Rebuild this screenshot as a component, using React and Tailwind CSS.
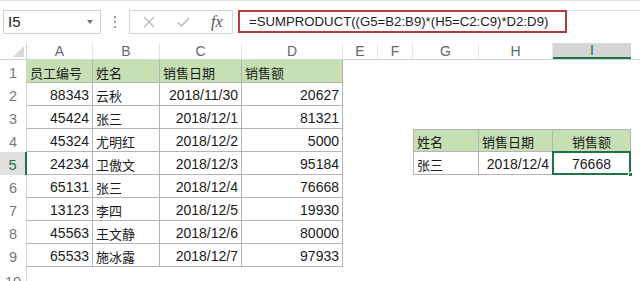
const cols = [
  "w-[27px]",
  "w-[66px]",
  "w-[67px]",
  "w-[82px]",
  "w-[101px]",
  "w-[35px]",
  "w-[35px]",
  "w-[66px]",
  "w-[74px]",
  "w-[78px]",
];
const letters = ["A", "B", "C", "D", "E", "F", "G", "H", "I"];

const data = [
  ["员工编号", "姓名", "销售日期", "销售额"],
  ["88343", "云秋", "2018/11/30", "20627"],
  ["45424", "张三", "2018/12/1", "81321"],
  ["45324", "尤明红", "2018/12/2", "5000"],
  ["24234", "卫傲文", "2018/12/3", "95184"],
  ["65131", "张三", "2018/12/4", "76668"],
  ["13123", "李四", "2018/12/5", "19930"],
  ["45563", "王文静", "2018/12/6", "80000"],
  ["65533", "施冰露", "2018/12/7", "97933"],
];

const lookup = {
  4: [
    { text: "姓名", align: "justify-start", cjk: true },
    { text: "销售日期", align: "justify-start", cjk: true },
    { text: "销售额", align: "justify-center", cjk: true },
  ],
  5: [
    { text: "张三", align: "justify-start", cjk: true },
    { text: "2018/12/4", align: "justify-end" },
    { text: "76668", align: "justify-center", selected: true },
  ],
};

function Cell({ width, children, className = "" }) {
  return (
    <div className={`${width} h-full shrink-0 flex items-center pt-[3px] px-[3px] ${className}`}>
      {children}
    </div>
  );
}

function FormulaBar() {
  return (
    <div className="h-[43px] flex items-start pt-[9px] border-t border-[#e4e4e4]">
      <div className="ml-[3px] w-[98px] h-[24px] border border-[#cfcfcf] flex items-center justify-between pl-[4px] pr-[7px]">
        <span className="text-[15px] text-[#222]">I5</span>
        <svg width="6" height="4" viewBox="0 0 6 4">
          <path d="M0 0h6L3 4z" fill="#777" />
        </svg>
      </div>
      <div className="w-[28px] h-[24px] flex flex-col items-center justify-center gap-[3px]">
        <span className="w-[2px] h-[2px] bg-[#9a9a9a]" />
        <span className="w-[2px] h-[2px] bg-[#9a9a9a]" />
        <span className="w-[2px] h-[2px] bg-[#9a9a9a]" />
      </div>
      <div className="w-[104px] h-[24px] border border-[#d6d6d6] flex items-center pl-[13px]">
        <svg width="12" height="12" viewBox="0 0 12 12">
          <path d="M1 1l10 10M11 1L1 11" stroke="#b5b5b5" strokeWidth="1.3" fill="none" />
        </svg>
        <svg width="13" height="12" viewBox="0 0 13 12" className="ml-[22px]">
          <path d="M1 6.5l3.5 3.5L12 2" stroke="#b5b5b5" strokeWidth="1.4" fill="none" />
        </svg>
        <span className="ml-[21px] text-[16px] italic text-[#555] font-['Liberation_Serif',serif]">fx</span>
      </div>
      <div className="ml-[5px] w-[329px] h-[23px] border-2 border-[#b8383c] flex items-center pl-[9px]">
        <span className="text-[13.2px] text-[#222]">
          =SUMPRODUCT((G5=B2:B9)*(H5=C2:C9)*D2:D9)
        </span>
      </div>
      <div className="flex-1 h-[23px] border-t border-[#dcdcdc]" />
    </div>
  );
}

function HeaderRow() {
  return (
    <div className="flex h-[17px] border-b border-[#d4d4d4]">
      <div className={`${cols[0]} h-full shrink-0 border-r border-[#d4d4d4] flex items-end justify-end pr-[2px] pb-[2px]`}>
        <svg width="11" height="11" viewBox="0 0 11 11">
          <path d="M11 0v11H0z" fill="#d9d9d9" />
        </svg>
      </div>
      {letters.map((l, i) => {
        const sel = l === "I";
        return (
          <div
            key={l}
            className={`${cols[i + 1]} h-full shrink-0 flex items-center justify-center text-[14px] ${
              sel
                ? "bg-[#d6d6d6] border-b-2 border-[#217346] text-[#217346]"
                : "border-r border-[#e6e6e6] text-[#666]"
            }`}
          >
            {l}
          </div>
        );
      })}
    </div>
  );
}

function Row({ n }) {
  const main = data[n - 1];
  const side = lookup[n];
  const selRow = n === 5;
  return (
    <div className="flex h-[23px]">
      <div
        className={`${cols[0]} h-full shrink-0 flex items-center justify-center pt-[5px] text-[14.5px] ${
          selRow
            ? "bg-[#e1e1e1] border-r-2 border-[#217346] text-[#217346]"
            : "border-r border-[#d4d4d4] text-[#777]"
        }`}
      >
        {n}
      </div>
      {main.map((v, i) => {
        const header = n === 1;
        const cjk = header || i === 1;
        const align = header || i === 1 ? "justify-start" : "justify-end";
        return (
          <Cell
            key={i}
            width={cols[i + 1]}
            className={`${align} border-r border-b border-[#b4b4b4] ${header ? "bg-[#c6e0b4]" : ""} ${
              cjk ? "text-[13px] font-['Noto_Sans_CJK_SC',sans-serif]" : "text-[14px]"
            }`}
          >
            {v}
          </Cell>
        );
      })}
      <div className={`${cols[5]} shrink-0`} />
      <div className={`${cols[6]} shrink-0`} />
      {side
        ? side.map((c, i) => (
            <Cell
              key={i}
              width={cols[i + 7]}
              className={`relative ${c.align} border-r border-b border-[#b4b4b4] ${i === 0 ? "border-l" : ""} ${
                n === 4 ? "border-t bg-[#c6e0b4]" : ""
              } ${c.cjk ? "text-[13px] font-['Noto_Sans_CJK_SC',sans-serif]" : "text-[14px]"}`}
            >
              {c.text}
              {c.selected && (
                <>
                  <span className="absolute -left-[1px] -top-[1px] -right-[1px] -bottom-[1px] border-2 border-[#217346]" />
                  <span className="absolute -right-[3px] -bottom-[3px] w-[5px] h-[5px] bg-[#217346] border border-white" />
                </>
              )}
            </Cell>
          ))
        : null}
    </div>
  );
}

export default function App() {
  return (
    <div className="w-[640px] h-[281px] overflow-hidden bg-white text-[#1a1a1a] font-['Liberation_Sans','Noto_Sans_CJK_SC',sans-serif]">
      <FormulaBar />
      <HeaderRow />
      {[1, 2, 3, 4, 5, 6, 7, 8, 9].map((n) => (
        <Row key={n} n={n} />
      ))}
      <div className="flex h-[14px]">
        <div className={`${cols[0]} h-full shrink-0 border-r border-[#d4d4d4] flex items-start justify-center pt-[8px] text-[14.5px] leading-none text-[#777] overflow-hidden`}>
          10
        </div>
      </div>
    </div>
  );
}
